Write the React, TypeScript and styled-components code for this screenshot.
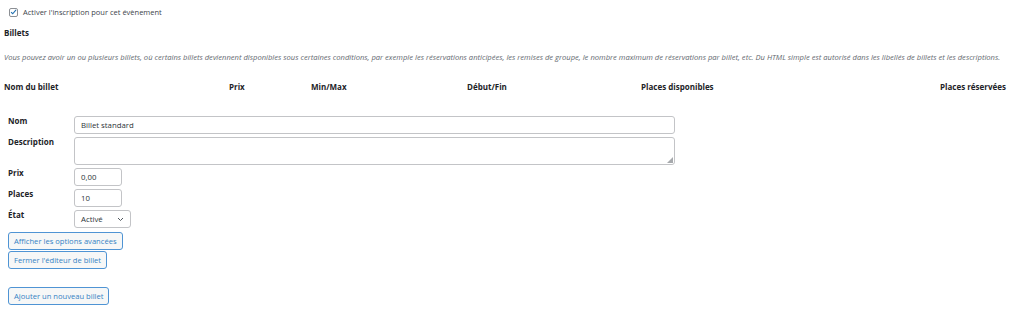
import React from "react";
import styled, { createGlobalStyle } from "styled-components";

const Global = createGlobalStyle`
  html, body { margin: 0; padding: 0; background: #fff; }
  body { font-family: "Open Sans", "Noto Sans", sans-serif; color: #1d2327; font-size: 8px; }
  * { box-sizing: border-box; }
`;

const Page = styled.div`
  width: 1024px;
  height: 319px;
  padding: 0 4px;
  overflow: hidden;
`;

const EnableRow = styled.label`
  display: flex;
  align-items: center;
  gap: 5px;
  height: 10px;
  margin-top: 7px;
  padding-left: 5px;
  color: #3c434a;
  font-size: 7.5px;
`;

const Check = styled.span`
  width: 9px;
  height: 9px;
  border: 1px solid #8c8f94;
  border-radius: 2px;
  display: flex;
  align-items: center;
  justify-content: center;
  background: #fff;
`;

const Heading = styled.h3`
  margin: 11px 0 0;
  font-size: 8px;
  font-weight: 700;
  line-height: 10px;
`;

const Intro = styled.p`
  margin: 14px 0 0;
  font-size: 7.6px;
  line-height: 10px;
  font-style: italic;
  color: #646970;
  white-space: nowrap;
`;

const HeadRow = styled.div`
  display: grid;
  grid-template-columns: 225px 82px 156px 174px 299px 1fr;
  margin-top: 20px;
  font-size: 8px;
  font-weight: 700;
  line-height: 10px;
`;

const Editor = styled.div`
  margin-top: 24px;
  padding-left: 4px;
  display: grid;
  grid-template-columns: 66px auto;
  row-gap: 3px;
  justify-content: start;
`;

const Label = styled.div`
  font-size: 8px;
  font-weight: 700;
  line-height: 10px;
  color: #1d2327;
`;

const Field = styled.div<{ $w: number; $h?: number }>`
  width: ${(p) => p.$w}px;
  height: ${(p) => p.$h ?? 18}px;
  border: 1px solid #c3c4c7;
  border-radius: 3px;
  background: #fff;
  color: #2c3338;
  font-size: 7.8px;
  line-height: 16px;
  padding: 0 6px;
  position: relative;
  display: flex;
  align-items: center;
  justify-content: space-between;
`;

const Grip = styled.svg`
  position: absolute;
  right: 1px;
  bottom: 1px;
`;

const Buttons = styled.div`
  margin-top: 4px;
  padding-left: 4px;
  display: flex;
  flex-direction: column;
  align-items: flex-start;
  gap: 1px;
`;

const Button = styled.button<{ $gap?: number }>`
  height: 18px;
  margin-top: ${(p) => p.$gap ?? 0}px;
  padding: 0 5px;
  border: 1px solid #4f94d4;
  border-radius: 3px;
  background: #f6f7f7;
  color: #3582c4;
  font-family: inherit;
  font-size: 7.6px;
  line-height: 16px;
`;

export default function App() {
  return (
    <Page>
      <Global />
      <EnableRow>
        <Check>
          <svg width="8" height="8" viewBox="0 0 8 8">
            <path d="M1.2 4.2 L3.1 6 L6.9 1.6" fill="none" stroke="#2271b1" strokeWidth="1.3" />
          </svg>
        </Check>
        Activer l'inscription pour cet évènement
      </EnableRow>
      <Heading>Billets</Heading>
      <Intro>
        Vous pouvez avoir un ou plusieurs billets, où certains billets deviennent disponibles sous certaines conditions, par exemple les réservations anticipées, les remises de groupe, le nombre maximum de réservations par billet, etc. Du HTML simple est autorisé dans les libellés de billets et les descriptions.
      </Intro>
      <HeadRow>
        <div>Nom du billet</div>
        <div>Prix</div>
        <div>Min/Max</div>
        <div>Début/Fin</div>
        <div>Places disponibles</div>
        <div>Places réservées</div>
      </HeadRow>
      <Editor>
        <Label>Nom</Label>
        <Field $w={601}>Billet standard</Field>
        <Label>Description</Label>
        <Field $w={601} $h={28}>
          <Grip width="6" height="6" viewBox="0 0 6 6">
            <path d="M6 0 L6 6 L0 6 Z" fill="#a7aaad" />
          </Grip>
        </Field>
        <Label>Prix</Label>
        <Field $w={48}>0,00</Field>
        <Label>Places</Label>
        <Field $w={48}>10</Field>
        <Label>État</Label>
        <Field $w={57}>
          Activé
          <svg width="7" height="5" viewBox="0 0 7 5">
            <path d="M1 1 L3.5 3.5 L6 1" fill="none" stroke="#50575e" strokeWidth="1" />
          </svg>
        </Field>
      </Editor>
      <Buttons>
        <Button>Afficher les options avancées</Button>
        <Button>Fermer l'éditeur de billet</Button>
        <Button $gap={17}>Ajouter un nouveau billet</Button>
      </Buttons>
    </Page>
  );
}
